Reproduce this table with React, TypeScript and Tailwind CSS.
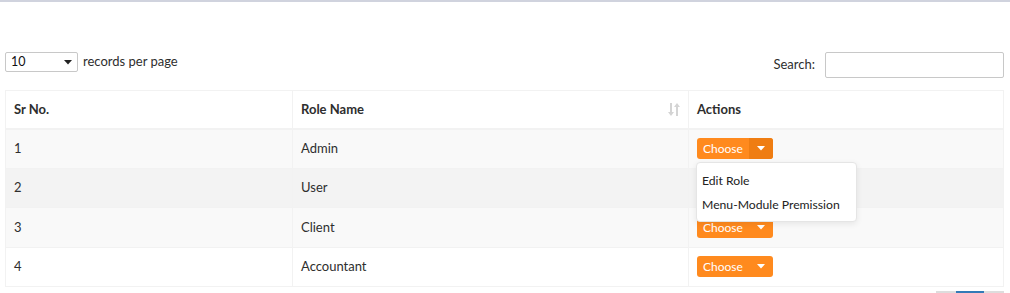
import { useState } from "react";

const roles = [
  { id: 1, name: "Admin" },
  { id: 2, name: "User" },
  { id: 3, name: "Client" },
  { id: 4, name: "Accountant" },
];

const rowBg = ["bg-[#f9f9f9]", "bg-[#f3f3f3]", "bg-[#f9f9f9]", "bg-white"];

function Caret({ className = "" }: { className?: string }) {
  return (
    <svg width="8" height="5" viewBox="0 0 8 5" className={className}>
      <path d="M0 0h8L4 4.5z" fill="currentColor" />
    </svg>
  );
}

function SortIcon() {
  return (
    <svg width="12" height="13" viewBox="0 0 12 13" className="text-[#d4d4d4]">
      <path d="M2 0h2v9h2l-3 4-3-4h2z" fill="currentColor" />
      <path d="M8 13h2V4h2L9 0 6 4h2z" fill="currentColor" />
    </svg>
  );
}

function ChooseButton({ open, onToggle }: { open: boolean; onToggle: () => void }) {
  return (
    <div className="relative inline-flex">
      <div className="flex h-[21px] overflow-hidden rounded-[3px] bg-[#ff8a1e] text-white">
        <button className="pl-[6px] pr-[6px] text-[12px] leading-[21px]">Choose</button>
        <button
          onClick={onToggle}
          className={`flex w-[24px] items-center justify-center ${open ? "bg-[#ef7d12]" : ""}`}
        >
          <Caret />
        </button>
      </div>
      {open && (
        <ul className="absolute -left-[1px] top-[24px] z-10 w-[161px] rounded-[4px] border border-[#e5e5e5] bg-white pt-[6px] pb-[4px] text-[12.2px] text-[#222] shadow-[0_2px_6px_rgba(0,0,0,0.08)]">
          <li className="px-[5px] py-[4px] leading-[16px]">Edit Role</li>
          <li className="px-[5px] py-[4px] leading-[16px]">Menu-Module Premission</li>
        </ul>
      )}
    </div>
  );
}

export default function App() {
  const [openRow, setOpenRow] = useState<number | null>(1);

  return (
    <div className="min-h-screen bg-white font-['Lato',sans-serif] text-[13px] text-[#2e2e2e]">
      <div className="h-[2px] bg-[#d0d3de]" />

      <div className="pl-[5px] pr-[6px] pt-[50px]">
        <div className="flex items-start justify-between">
          <div className="flex items-center gap-[5px]">
            <div className="flex h-[20px] w-[73px] items-center justify-between rounded-[2px] border border-[#c8c8c8] bg-white pl-[5px] pr-[5px] text-[12.5px] text-[#111]">
              <span>10</span>
              <Caret className="text-[#222]" />
            </div>
            <span>records per page</span>
          </div>
          <div className="flex items-center gap-[10px]">
            <span>Search:</span>
            <input className="h-[26px] w-[179px] rounded-[2px] border border-[#c8c8c8] outline-none" />
          </div>
        </div>

        <table className="mt-[12px] w-full table-fixed border-collapse border border-[#f2f2f2]">
          <colgroup>
            <col className="w-[287px]" />
            <col className="w-[396px]" />
            <col />
          </colgroup>
          <thead>
            <tr className="h-[38px] border-b-2 border-[#f2f2f2] text-left">
              <th className="border-r border-[#f2f2f2] px-2 font-bold">Sr No.</th>
              <th className="border-r border-[#f2f2f2] px-2 font-bold">
                <div className="flex items-center justify-between">
                  <span>Role Name</span>
                  <SortIcon />
                </div>
              </th>
              <th className="px-2 font-bold">Actions</th>
            </tr>
          </thead>
          <tbody>
            {roles.map((r, i) => (
              <tr key={r.id} className={`h-[39.5px] border-t border-[#f2f2f2] ${rowBg[i]}`}>
                <td className="border-r border-[#f2f2f2] px-2">{r.id}</td>
                <td className="border-r border-[#f2f2f2] px-2">{r.name}</td>
                <td className="px-2">
                  <ChooseButton
                    open={openRow === r.id}
                    onToggle={() => setOpenRow(openRow === r.id ? null : r.id)}
                  />
                </td>
              </tr>
            ))}
          </tbody>
        </table>

        <div className="mt-[4px] flex justify-end">
          <div className="flex h-[30px] border-t-[2px] border-[#ddd]">
            <div className="w-[20px]" />
            <div className="-mt-[2px] w-[28px] border-t-[2px] border-[#337ab7] bg-[#3c8dbc]" />
            <div className="w-[20px]" />
          </div>
        </div>
      </div>
    </div>
  );
}
